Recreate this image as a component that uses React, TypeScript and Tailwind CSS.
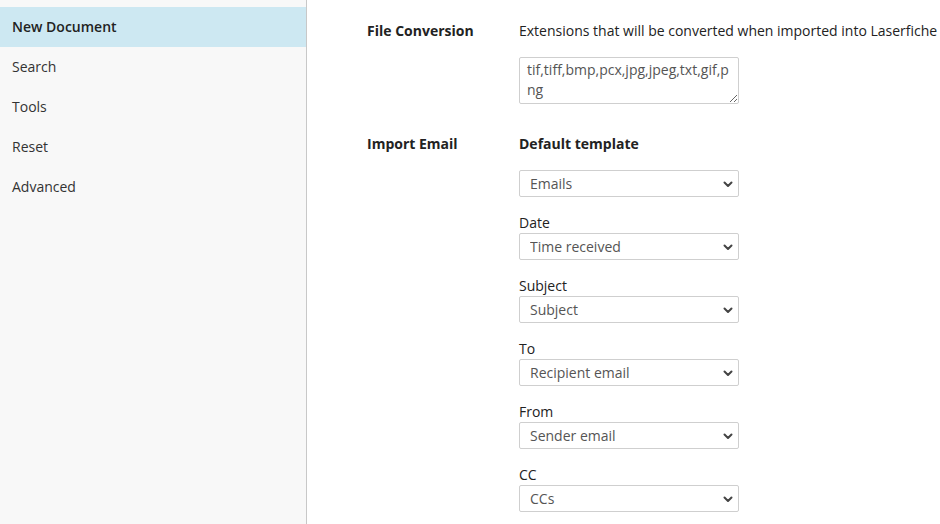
import React from 'react';

const navItems = ['New Document', 'Search', 'Tools', 'Reset', 'Advanced'];

const Chevron = () => (
  <svg className="pointer-events-none absolute right-[5px] top-1/2 -translate-y-1/2" width="12" height="12" viewBox="0 0 12 12">
    <path d="M2.5 4.5 L6 8 L9.5 4.5" fill="none" stroke="#444" strokeWidth="2" strokeLinecap="round" strokeLinejoin="round" />
  </svg>
);

const SelectBox: React.FC<{ value: string }> = ({ value }) => (
  <div className="relative w-[220px]">
    <select
      defaultValue={value}
      className="h-[27px] w-full appearance-none rounded-[2px] border border-[#cfcfcf] bg-white pl-[10px] text-[14px] text-[#555] outline-none"
    >
      <option>{value}</option>
    </select>
    <Chevron />
  </div>
);

const fields = [
  { label: 'Date', value: 'Time received' },
  { label: 'Subject', value: 'Subject' },
  { label: 'To', value: 'Recipient email' },
  { label: 'From', value: 'Sender email' },
  { label: 'CC', value: 'CCs' },
];

export default function App() {
  return (
    <div className="flex h-[524px] w-[940px] overflow-hidden bg-white text-[14px] text-[#222]" style={{ fontFamily: '"Open Sans", "Noto Sans", sans-serif' }}>
      <aside className="w-[307px] shrink-0 border-r border-[#c8c8c8] bg-[#f8f8f8] pt-[7px]">
        {navItems.map((item, i) => (
          <div
            key={item}
            className={
              'flex h-10 items-center pb-[2px] pl-3 ' +
              (i === 0 ? 'bg-[#cde8f2] font-semibold text-[#222]' : 'text-[#333]')
            }
          >
            {item}
          </div>
        ))}
      </aside>

      <main className="flex-1 pl-[60px] pt-[21px]">
        <div className="flex">
          <div className="w-[152px] shrink-0 font-bold leading-5">File Conversion</div>
          <div>
            <div className="whitespace-nowrap leading-5">Extensions that will be converted when imported into Laserfiche</div>
            <textarea
              defaultValue="tif,tiff,bmp,pcx,jpg,jpeg,txt,gif,png"
              className="mt-4 block h-[47px] w-[220px] rounded-[2px] border border-[#cfcfcf] bg-white px-[7px] pt-[2px] text-[14px] leading-5 text-[#555] outline-none"
            />
          </div>
        </div>

        <div className="mt-[29px] flex">
          <div className="w-[152px] shrink-0 font-bold leading-[21px]">Import Email</div>
          <div className="flex flex-col gap-[15px]">
            <div className="mb-px font-bold leading-[21px]">Default template</div>
            <SelectBox value="Emails" />
            {fields.map((f) => (
              <div key={f.label}>
                <div className="leading-[21px]">{f.label}</div>
                <SelectBox value={f.value} />
              </div>
            ))}
          </div>
        </div>
      </main>
    </div>
  );
}
